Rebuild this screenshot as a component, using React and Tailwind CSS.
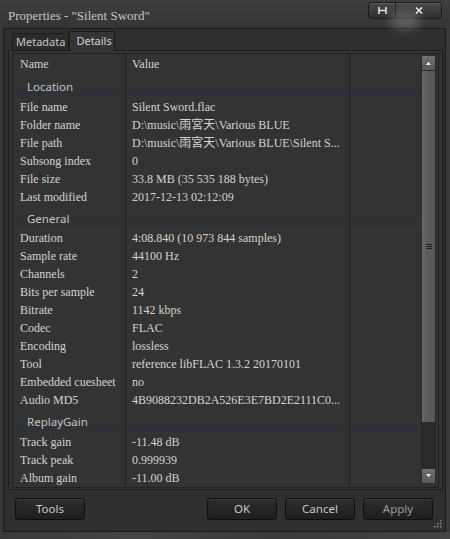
import React from "react";

const serif = { fontFamily: '"Liberation Serif", "Noto Sans CJK TC", serif' };
const sans = { fontFamily: '"Noto Sans", "Open Sans", sans-serif' };

const sections = [
  {
    title: "Location",
    rows: [
      ["File name", "Silent Sword.flac"],
      ["Folder name", "D:\\music\\雨宮天\\Various BLUE"],
      ["File path", "D:\\music\\雨宮天\\Various BLUE\\Silent S..."],
      ["Subsong index", "0"],
      ["File size", "33.8 MB (35 535 188 bytes)"],
      ["Last modified", "2017-12-13 02:12:09"],
    ],
  },
  {
    title: "General",
    rows: [
      ["Duration", "4:08.840 (10 973 844 samples)"],
      ["Sample rate", "44100 Hz"],
      ["Channels", "2"],
      ["Bits per sample", "24"],
      ["Bitrate", "1142 kbps"],
      ["Codec", "FLAC"],
      ["Encoding", "lossless"],
      ["Tool", "reference libFLAC 1.3.2 20170101"],
      ["Embedded cuesheet", "no"],
      ["Audio MD5", "4B9088232DB2A526E3E7BD2E2111C0..."],
    ],
  },
  {
    title: "ReplayGain",
    rows: [
      ["Track gain", "-11.48 dB"],
      ["Track peak", "0.999939"],
      ["Album gain", "-11.00 dB"],
    ],
  },
];

const Row = ({ name, value }) => (
  <div className="flex h-[18px] text-[12px] leading-[18px] text-[#d4d4d4]" style={serif}>
    <div className="w-[113px] shrink-0 border-r border-[#1f1f1f] pl-[7px] whitespace-nowrap overflow-hidden">{name}</div>
    <div className="w-[224px] shrink-0 border-r border-[#1f1f1f] pl-[6px] whitespace-nowrap overflow-hidden">{value}</div>
    <div className="flex-1" />
  </div>
);

const Group = ({ title }) => (
  <div className="flex h-[24px] bg-[linear-gradient(to_bottom,#333333_45%,#2e3238_80%,#333333)]">
    <div
      className="w-[113px] shrink-0 border-r border-[#1f1f1f] pl-[14px] pt-[4px] text-[11.5px] leading-[18px] text-[#c4c4c4]"
      style={sans}
    >
      {title}
    </div>
    <div className="w-[224px] shrink-0 border-r border-[#1f1f1f]" />
    <div className="flex-1" />
  </div>
);

const Btn = ({ children, dim }) => (
  <div
    className={`w-[70px] h-[22px] flex items-center justify-center rounded-[3px] border border-[#0e0e0e] bg-[linear-gradient(to_bottom,#2e2e2e,#1e1e1e)] shadow-[inset_0_1px_0_#3c3c3c] text-[11.5px] ${dim ? "text-[#9c9c9c]" : "text-[#cacaca]"}`}
    style={sans}
  >
    {children}
  </div>
);

const Scrollbar = () => (
  <div className="w-[15px] shrink-0 flex flex-col mt-[1px] mb-[3px]">
    <div className="h-[16px] border border-[#2a2a2a] bg-[linear-gradient(to_bottom,#727272,#585858)] flex items-center justify-center">
      <svg width="9" height="6" viewBox="0 0 9 6">
        <path d="M1 5.5 L4.5 1 L8 5.5 Z" fill="#e6e6e6" stroke="#333" strokeWidth="0.6" />
      </svg>
    </div>
    <div className="h-[352px] border-x border-b border-[#2a2a2a] bg-[linear-gradient(to_right,#6c6c6c,#5e5e5e_30%,#575757)] flex items-center justify-center">
      <div className="flex flex-col gap-[1px]">
        <div className="w-[6px] h-[1px] bg-[#1e1e1e]" />
        <div className="w-[6px] h-[1px] bg-[#1e1e1e]" />
        <div className="w-[6px] h-[1px] bg-[#1e1e1e]" />
      </div>
    </div>
    <div className="flex-1 bg-[#2a2a2a]" />
    <div className="h-[16px] border border-[#2a2a2a] bg-[linear-gradient(to_bottom,#727272,#585858)] flex items-center justify-center">
      <svg width="9" height="6" viewBox="0 0 9 6">
        <path d="M1 0.5 L8 0.5 L4.5 5 Z" fill="#e6e6e6" stroke="#333" strokeWidth="0.6" />
      </svg>
    </div>
  </div>
);

export default function App() {
  return (
    <div className="w-[450px] h-[539px] bg-[#3a3a3a] flex flex-col overflow-hidden relative">
      {/* title bar */}
      <div className="h-[28px] flex justify-between bg-[linear-gradient(to_bottom,#3e3e3e,#353535)]">
        <div className="pl-[8px] pt-[6px] text-[13px] text-[#c6c6c6]" style={serif}>
          Properties - "Silent Sword"
        </div>
        <div className="flex mt-[2px] mr-[8px] h-[17px] rounded-[3px] border border-[#1c1c1c] bg-[linear-gradient(to_bottom,#4a4a4a,#2e2e2e)] shadow-[inset_0_1px_0_#5a5a5a]">
          <div className="w-[27px] flex items-center justify-center border-r border-[#1c1c1c]">
            <svg width="9" height="7" viewBox="0 0 9 7">
              <path d="M1 0 V7 M8 0 V7 M1 3.5 H8" stroke="#e0e0e0" strokeWidth="1.6" />
            </svg>
          </div>
          <div className="w-[45px] flex items-center justify-center relative">
            <div className="absolute left-[-6px] top-[8px] w-[30px] h-[18px] rounded-full bg-[#9a9a9a] opacity-40 blur-[5px]" />
            <svg width="8" height="7" viewBox="0 0 8 7" className="relative">
              <path d="M1 0.5 L7 6.5 M7 0.5 L1 6.5" stroke="#e6e6e6" strokeWidth="1.6" />
            </svg>
          </div>
        </div>
      </div>

      {/* client area */}
      <div className="ml-[3px] w-[443px] h-[504px] border border-[#1a1a1a] bg-[#2f2f2f] flex flex-col">
        {/* tabs */}
        <div className="h-[21px] flex items-end pl-[8px] pt-[1px]" style={sans}>
          <div className="h-[17px] px-[3px] border border-b-0 border-[#1c1c1c] bg-[#2c2c2c] text-[11px] leading-[16px] text-[#c4c4c4] rounded-t-[2px]">
            Metadata
          </div>
          <div className="h-[20px] w-[46px] pl-[6px] border border-b-0 border-[#1c1c1c] bg-[#353535] text-[11px] leading-[18px] text-[#d0d0d0] rounded-t-[2px] relative top-[1px]">
            Details
          </div>
        </div>

        {/* tab panel */}
        <div className="ml-[4px] w-[435px] h-[440px] border border-[#1c1c1c] bg-[#343434] px-[3px] pt-[2px] pb-[1px]">
          <div className="h-full border border-[#222222] bg-[#333333] flex pr-[2px] overflow-hidden">
            <div className="flex-1 flex flex-col overflow-hidden">
              {/* header */}
              <div className="flex h-[20px] text-[12px] leading-[20px] text-[#d4d4d4] shrink-0" style={serif}>
                <div className="w-[113px] shrink-0 border-r border-[#1f1f1f] pl-[7px]">Name</div>
                <div className="w-[224px] shrink-0 border-r border-[#1f1f1f] pl-[6px]">Value</div>
                <div className="flex-1" />
              </div>
              {sections.map((s) => (
                <React.Fragment key={s.title}>
                  <Group title={s.title} />
                  {s.rows.map(([n, v]) => (
                    <Row key={n} name={n} value={v} />
                  ))}
                </React.Fragment>
              ))}
              <div className="flex flex-1">
                <div className="w-[113px] shrink-0 border-r border-[#1f1f1f]" />
                <div className="w-[224px] shrink-0 border-r border-[#1f1f1f]" />
              </div>
            </div>
            <Scrollbar />
          </div>
        </div>

        {/* buttons */}
        <div className="flex-1 flex items-start pt-[8px] pl-[11px] pr-[12px] relative">
          <Btn>Tools</Btn>
          <div className="flex-1" />
          <div className="flex gap-[8px]">
            <Btn>OK</Btn>
            <Btn>Cancel</Btn>
            <Btn dim>Apply</Btn>
          </div>
          <svg className="absolute right-[3px] bottom-[3px]" width="8" height="8" viewBox="0 0 8 8">
            <rect x="6" y="0" width="1.5" height="1.5" fill="#8a8a8a" />
            <rect x="3" y="3" width="1.5" height="1.5" fill="#8a8a8a" />
            <rect x="6" y="3" width="1.5" height="1.5" fill="#8a8a8a" />
            <rect x="0" y="6" width="1.5" height="1.5" fill="#8a8a8a" />
            <rect x="3" y="6" width="1.5" height="1.5" fill="#8a8a8a" />
            <rect x="6" y="6" width="1.5" height="1.5" fill="#8a8a8a" />
          </svg>
        </div>
      </div>
      <div className="flex-1 bg-[linear-gradient(to_right,#3a3a3a,#454545_30%,#3a3a3a_60%,#444444)]" />
    </div>
  );
}
